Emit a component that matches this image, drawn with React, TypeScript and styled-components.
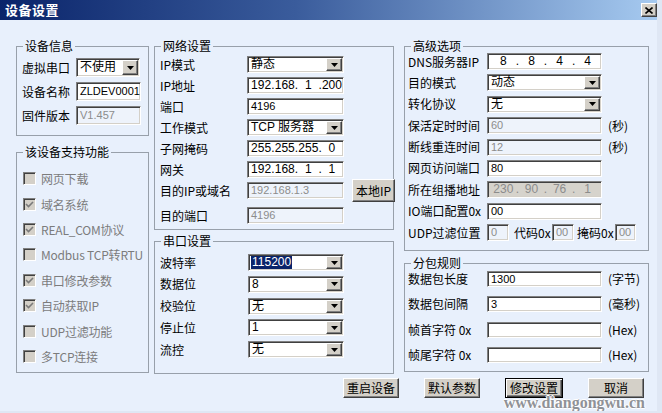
import React from "react";
import styled, { createGlobalStyle } from "styled-components";

const GlobalStyle = createGlobalStyle`
  html, body {
    margin: 0;
    padding: 0;
    background: #e8f0fc;
  }
  body {
    font-family: "Noto Sans CJK SC", sans-serif;
    font-size: 12px;
    color: #000;
  }
`;

const BG = "#e8f0fc";

const Window = styled.div`
  position: relative;
  width: 662px;
  height: 413px;
  box-sizing: border-box;
  background: ${BG};
  border-right: 5px solid #dfe7f4;
  border-bottom: 2px solid #dfe7f4;
  display: flex;
  flex-direction: column;
  overflow: hidden;
`;

const TitleBar = styled.div`
  flex: none;
  height: 20px;
  display: flex;
  align-items: center;
  justify-content: space-between;
  padding-left: 5px;
  background: linear-gradient(to right, #0a246a 0%, #3a5c9c 45%, #a6caf0 100%);
`;

const Title = styled.span`
  color: #fff;
  font-weight: 700;
  font-size: 13px;
  line-height: 16px;
  letter-spacing: 0.5px;
`;

const CloseButton = styled.span`
  width: 16px;
  height: 14px;
  box-sizing: border-box;
  background: #d4d0c8;
  border: 1px solid;
  border-color: #fff #404040 #404040 #fff;
  box-shadow: inset -1px -1px 0 #808080;
  display: flex;
  align-items: center;
  justify-content: center;
`;

const Body = styled.div`
  display: flex;
  flex-direction: column;
  padding: 26px 0 0 16px;
`;

const Columns = styled.div`
  display: flex;
  align-items: flex-start;
`;

const Column = styled.div<{ $w: number; $ml?: number }>`
  width: ${(p) => p.$w}px;
  margin-left: ${(p) => p.$ml ?? 0}px;
  display: flex;
  flex-direction: column;
  flex: none;
`;

const Group = styled.div<{
  $h: number;
  $pt: number;
  $pl?: number;
  $gap?: number;
  $mt?: number;
}>`
  position: relative;
  box-sizing: border-box;
  height: ${(p) => p.$h}px;
  margin-top: ${(p) => p.$mt ?? 0}px;
  padding: ${(p) => p.$pt}px 0 0 ${(p) => p.$pl ?? 5}px;
  border: 1px solid #98a0aa;
  display: flex;
  flex-direction: column;
  gap: ${(p) => p.$gap ?? 0}px;
`;

const Legend = styled.span`
  position: absolute;
  top: -7px;
  left: 6px;
  padding: 0 2px;
  background: ${BG};
  line-height: 12px;
  white-space: nowrap;
`;

const Field = styled.div<{ $h: number; $mt?: number }>`
  display: flex;
  align-items: center;
  height: ${(p) => p.$h}px;
  margin-top: ${(p) => p.$mt ?? 0}px;
  flex: none;
`;

const Label = styled.span<{ $w: number }>`
  flex: none;
  width: ${(p) => p.$w}px;
  white-space: nowrap;
  line-height: 14px;
`;

const InlineLabel = styled.span<{ $w: number; $ml: number }>`
  flex: none;
  width: ${(p) => p.$w}px;
  margin-left: ${(p) => p.$ml}px;
  white-space: nowrap;
  line-height: 14px;
`;

const Unit = styled.span`
  margin-left: 6px;
  white-space: nowrap;
  line-height: 14px;
`;

const Box = styled.div<{ $w: number; $h?: number; $bg?: string; $muted?: boolean }>`
  flex: none;
  box-sizing: border-box;
  width: ${(p) => p.$w}px;
  height: ${(p) => p.$h ?? 17}px;
  border: 1px solid;
  border-color: #808080 #ffffff #ffffff #808080;
  box-shadow: inset 1px 1px 0 #404040, inset -1px -1px 0 #d4d0c8;
  background: ${(p) => p.$bg ?? "#fff"};
  color: ${(p) => (p.$muted ? "#8c8c8c" : "#000")};
  font-family: "Liberation Sans", "Noto Sans CJK SC", sans-serif;
  font-size: 11px;
  line-height: 13px;
  padding: 0 1px 0 3px;
  display: flex;
  align-items: center;
  white-space: pre;
  overflow: hidden;
`;

const BoxText = styled.span<{ $selected?: boolean }>`
  padding: 0 1px;
  margin-left: -1px;
  font-size: 12px;
  background: ${(p) => (p.$selected ? "#0a246a" : "transparent")};
  color: ${(p) => (p.$selected ? "#fff" : "inherit")};
`;

const DropButton = styled.span`
  margin-left: auto;
  align-self: stretch;
  margin-top: 1px;
  margin-bottom: 1px;
  width: 16px;
  box-sizing: border-box;
  background: #d4d0c8;
  border: 1px solid;
  border-color: #fff #404040 #404040 #fff;
  box-shadow: inset -1px -1px 0 #808080;
  display: flex;
  align-items: center;
  justify-content: center;
`;

const IpSeg = styled.span`
  flex: 1;
  text-align: center;
  font-size: 12px;
`;

const IpDot = styled.span`
  flex: none;
  font-size: 12px;
`;

const CheckRow = styled.div`
  display: flex;
  align-items: center;
  height: 25.4px;
  gap: 5px;
  color: #7c7c7c;
  white-space: nowrap;
  letter-spacing: -0.2px;
`;

const CheckBox = styled.span`
  flex: none;
  width: 13px;
  height: 13px;
  box-sizing: border-box;
  border: 1px solid;
  border-color: #808080 #fff #fff #808080;
  box-shadow: inset 1px 1px 0 #404040, inset -1px -1px 0 #d4d0c8;
  background: #d4d0c8;
  display: flex;
  align-items: center;
  justify-content: center;
`;

const Button = styled.button<{ $w: number; $default?: boolean; $h?: number }>`
  flex: none;
  width: ${(p) => p.$w}px;
  height: ${(p) => p.$h ?? 20}px;
  padding: 0;
  margin: 0;
  box-sizing: border-box;
  background: #d4d0c8;
  font-family: "Noto Sans CJK SC", sans-serif;
  font-size: 12px;
  line-height: 14px;
  color: #000;
  border: 1px solid;
  border-color: ${(p) => (p.$default ? "#000" : "#fff #404040 #404040 #fff")};
  box-shadow: ${(p) =>
    p.$default
      ? "inset 1px 1px 0 #fff, inset -1px -1px 0 #404040, inset -2px -2px 0 #808080"
      : "inset -1px -1px 0 #808080"};
`;

const SideButton = styled(Button)`
  margin-left: 8px;
`;

const ButtonBar = styled.div`
  display: flex;
  justify-content: flex-end;
  gap: 25px;
  margin-top: 4px;
  padding-right: 13px;
`;

const Watermark = styled.span`
  position: absolute;
  right: 12px;
  bottom: -1px;
  font-family: "Liberation Serif", serif;
  font-weight: 700;
  font-size: 16px;
  color: #8f9298;
  text-shadow: 1px 0 0 #fff, -1px 0 0 #fff, 0 1px 0 #fff, 0 -1px 0 #fff;
  pointer-events: none;
`;

const Arrow = () => (
  <svg width="7" height="4" viewBox="0 0 7 4">
    <path d="M0 0h7L3.5 4z" fill="#000" />
  </svg>
);

const Tick = () => (
  <svg width="9" height="9" viewBox="0 0 9 9">
    <path d="M1 4l2.5 2.5L8 2" stroke="#7a7a7a" strokeWidth="1.6" fill="none" />
  </svg>
);

type SelectProps = { w: number; h?: number; value: string; selected?: boolean };
const Select = ({ w, h, value, selected }: SelectProps) => (
  <Box $w={w} $h={h}>
    <BoxText $selected={selected}>{value}</BoxText>
    <DropButton>
      <Arrow />
    </DropButton>
  </Box>
);

type IpProps = { w: number; parts: string[]; bg?: string; muted?: boolean };
const IpBox = ({ w, parts, bg, muted }: IpProps) => (
  <Box $w={w} $bg={bg} $muted={muted}>
    {parts.map((p, i) => (
      <React.Fragment key={i}>
        {i > 0 && <IpDot>.</IpDot>}
        <IpSeg>{p}</IpSeg>
      </React.Fragment>
    ))}
  </Box>
);

const features = [
  { name: "网页下载", on: false },
  { name: "域名系统", on: true },
  { name: "REAL_COM协议", on: true },
  { name: "Modbus TCP转RTU", on: false },
  { name: "串口修改参数", on: true },
  { name: "自动获取IP", on: true },
  { name: "UDP过滤功能", on: false },
  { name: "多TCP连接", on: false },
];

const serial = [
  { label: "波特率", value: "115200", selected: true },
  { label: "数据位", value: "8" },
  { label: "校验位", value: "无" },
  { label: "停止位", value: "1" },
  { label: "流控", value: "无" },
];

const packets = [
  { label: "数据包长度", value: "1300", unit: "(字节)" },
  { label: "数据包间隔", value: "3", unit: "(毫秒)" },
  { label: "帧首字符 0x", value: "", unit: "(Hex)" },
  { label: "帧尾字符 0x", value: "", unit: "(Hex)" },
];

export default function App() {
  return (
    <>
      <GlobalStyle />
      <Window>
        <TitleBar>
          <Title>设备设置</Title>
          <CloseButton>
            <svg width="8" height="7" viewBox="0 0 8 7">
              <path d="M0.5 0.5L7.5 6.5M7.5 0.5L0.5 6.5" stroke="#000" strokeWidth="1.6" />
            </svg>
          </CloseButton>
        </TitleBar>
        <Body>
          <Columns>
            <Column $w={133}>
              <Group $h={90} $pt={11} $gap={5}>
                <Legend>设备信息</Legend>
                <Field $h={19}>
                  <Label $w={54}>虚拟串口</Label>
                  <Select w={64} h={19} value="不使用" />
                </Field>
                <Field $h={19}>
                  <Label $w={54}>设备名称</Label>
                  <Box $w={65} $h={19}>ZLDEV0001</Box>
                </Field>
                <Field $h={19}>
                  <Label $w={54}>固件版本</Label>
                  <Box $w={65} $h={19} $bg="#eef3fb" $muted>
                    V1.457
                  </Box>
                </Field>
              </Group>
              <Group $h={221} $mt={16} $pt={13} $pl={6}>
                <Legend>该设备支持功能</Legend>
                {features.map((f) => (
                  <CheckRow key={f.name}>
                    <CheckBox>{f.on && <Tick />}</CheckBox>
                    {f.name}
                  </CheckRow>
                ))}
              </Group>
            </Column>

            <Column $w={240} $ml={5}>
              <Group $h={184} $pt={9} $gap={4}>
                <Legend>网络设置</Legend>
                <Field $h={17}>
                  <Label $w={87}>IP模式</Label>
                  <Select w={97} value="静态" />
                </Field>
                <Field $h={17}>
                  <Label $w={87}>IP地址</Label>
                  <IpBox w={97} parts={["192", "168", "1", "200"]} />
                </Field>
                <Field $h={17}>
                  <Label $w={87}>端口</Label>
                  <Box $w={97}>4196</Box>
                </Field>
                <Field $h={17}>
                  <Label $w={87}>工作模式</Label>
                  <Select w={97} value="TCP 服务器" />
                </Field>
                <Field $h={17}>
                  <Label $w={87}>子网掩码</Label>
                  <IpBox w={97} parts={["255", "255", "255", "0"]} />
                </Field>
                <Field $h={17}>
                  <Label $w={87}>网关</Label>
                  <IpBox w={97} parts={["192", "168", "1", "1"]} />
                </Field>
                <Field $h={17}>
                  <Label $w={87}>目的IP或域名</Label>
                  <Box $w={97} $bg="#eef3fb" $muted>
                    192.168.1.3
                  </Box>
                  <SideButton $w={43} $h={23}>
                    本地IP
                  </SideButton>
                </Field>
                <Field $h={17} $mt={4}>
                  <Label $w={87}>目的端口</Label>
                  <Box $w={97} $bg="#eef3fb" $muted>
                    4196
                  </Box>
                </Field>
              </Group>
              <Group $h={133} $mt={11} $pt={12} $gap={4.75}>
                <Legend>串口设置</Legend>
                {serial.map((s) => (
                  <Field $h={17} key={s.label}>
                    <Label $w={88}>{s.label}</Label>
                    <Select w={96} value={s.value} selected={s.selected} />
                  </Field>
                ))}
              </Group>
            </Column>

            <Column $w={245} $ml={10}>
              <Group $h={205} $pt={6} $pl={3} $gap={4.4}>
                <Legend>高级选项</Legend>
                <Field $h={17}>
                  <Label $w={79}>DNS服务器IP</Label>
                  <IpBox w={115} parts={["8", "8", "4", "4"]} />
                </Field>
                <Field $h={17}>
                  <Label $w={79}>目的模式</Label>
                  <Select w={115} value="动态" />
                </Field>
                <Field $h={17}>
                  <Label $w={79}>转化协议</Label>
                  <Select w={115} value="无" />
                </Field>
                <Field $h={17}>
                  <Label $w={79}>保活定时时间</Label>
                  <Box $w={115} $bg="#eef3fb" $muted>
                    60
                  </Box>
                  <Unit>(秒)</Unit>
                </Field>
                <Field $h={17}>
                  <Label $w={79}>断线重连时间</Label>
                  <Box $w={115} $bg="#eef3fb" $muted>
                    12
                  </Box>
                  <Unit>(秒)</Unit>
                </Field>
                <Field $h={17}>
                  <Label $w={79}>网页访问端口</Label>
                  <Box $w={115}>80</Box>
                </Field>
                <Field $h={17}>
                  <Label $w={79}>所在组播地址</Label>
                  <IpBox w={115} parts={["230", "90", "76", "1"]} bg="#d6d3cc" muted />
                </Field>
                <Field $h={17}>
                  <Label $w={79}>IO端口配置0x</Label>
                  <Box $w={115}>00</Box>
                </Field>
                <Field $h={17}>
                  <Label $w={79}>UDP过滤位置</Label>
                  <Box $w={22} $bg="#eef3fb" $muted>
                    0
                  </Box>
                  <InlineLabel $w={38} $ml={5}>
                    代码0x
                  </InlineLabel>
                  <Box $w={22} $bg="#eef3fb" $muted>
                    00
                  </Box>
                  <InlineLabel $w={38} $ml={3}>
                    掩码0x
                  </InlineLabel>
                  <Box $w={21} $bg="#eef3fb" $muted>
                    00
                  </Box>
                </Field>
              </Group>
              <Group $h={109} $mt={12} $pt={7} $pl={3} $gap={9.4}>
                <Legend>分包规则</Legend>
                {packets.map((p) => (
                  <Field $h={16} key={p.label}>
                    <Label $w={79}>{p.label}</Label>
                    <Box $w={115} $h={16}>
                      {p.value}
                    </Box>
                    <Unit>{p.unit}</Unit>
                  </Field>
                ))}
              </Group>
            </Column>
          </Columns>

          <ButtonBar>
            <Button $w={56}>重启设备</Button>
            <Button $w={56}>默认参数</Button>
            <Button $w={58} $default>
              修改设置
            </Button>
            <Button $w={56}>取消</Button>
          </ButtonBar>
        </Body>
        <Watermark>www.diangongwu.cn</Watermark>
      </Window>
    </>
  );
}
